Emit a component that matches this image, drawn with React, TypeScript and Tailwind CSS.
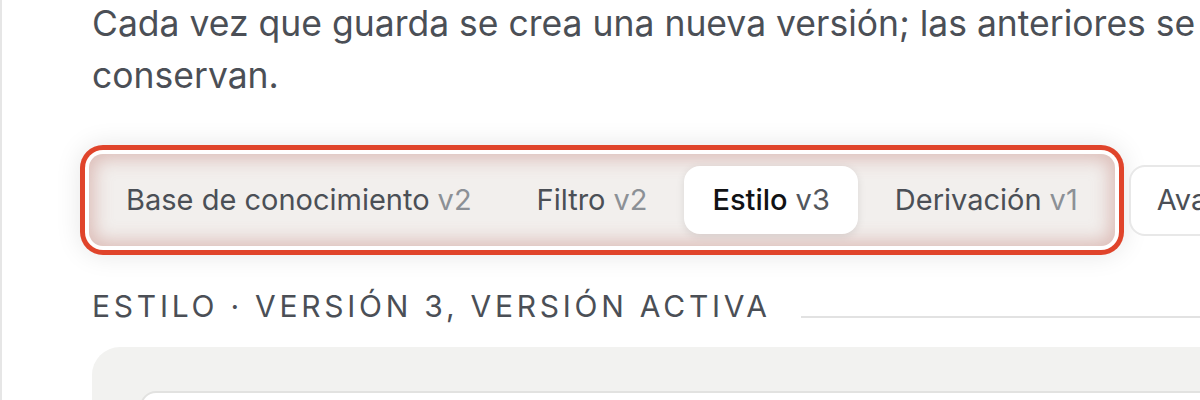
import React from 'react';

const tabs = [
  { name: 'Base de conocimiento', ver: 'v2', active: false },
  { name: 'Filtro', ver: 'v2', active: false },
  { name: 'Estilo', ver: 'v3', active: true },
  { name: 'Derivación', ver: 'v1', active: false },
];

const App: React.FC = () => {
  return (
    <div
      className="relative w-[1200px] h-[400px] overflow-hidden bg-white border-l-2 border-[#e6e6e6]"
      style={{ fontFamily: 'Inter, "Noto Sans", sans-serif' }}
    >
      <div className="w-[1400px] pl-[90px]">
        {/* descripción */}
        <p className="-mt-[2px] w-[1120px] text-[35.5px] leading-[52px] text-[#4b4f56]">
          Cada vez que guarda se crea una nueva versión; las anteriores se conservan.
        </p>

        {/* pestañas de versión */}
        <div className="mt-[52px] flex items-center gap-[14px]">
          <div className="-ml-[3px] flex items-center gap-[9px] rounded-[14px] bg-[#f2efed] px-[9px] py-[12px] shadow-[0_0_0_4px_#ffffff,0_0_0_9px_#e0442b,0_0_26px_9px_rgba(0,0,0,0.10),inset_0_0_18px_5px_rgba(190,120,110,0.42)]">
            {tabs.map((t) => (
              <div
                key={t.name}
                className={
                  t.active
                    ? 'flex h-[68px] items-center rounded-[16px] bg-white px-[28px] text-[29px] shadow-[0_2px_8px_rgba(0,0,0,0.10)]'
                    : 'flex h-[68px] items-center rounded-[16px] px-[28px] text-[29px]'
                }
              >
                <span className={t.active ? 'font-medium text-[#111214]' : 'text-[#4b4f56]'}>{t.name}</span>
                <span className={t.active ? 'ml-[8px] text-[#52565c]' : 'ml-[8px] text-[#8c9096]'}>{t.ver}</span>
              </div>
            ))}
          </div>
          <div className="flex h-[71px] items-center rounded-[16px] border-2 border-[#e8e8e8] bg-white px-[26px] text-[29px] text-[#4b4f56] whitespace-nowrap">
            Avanzado
          </div>
        </div>

        {/* encabezado de la sección */}
        <div className="mt-[40px] flex items-end gap-[30px]">
          <h2 className="text-[30px] leading-[40px] font-normal uppercase tracking-[0.125em] text-[#4b4f56] whitespace-nowrap">
            Estilo · Versión 3, versión activa
          </h2>
          <div className="mb-[8px] h-[2px] flex-1 bg-[#e2e2e2]" />
        </div>

        {/* panel */}
        <div className="mt-[21px] h-[100px] rounded-tl-[28px] bg-[#f2f2f0] pl-[48px] pt-[44px]">
          <div className="h-[60px] rounded-tl-[16px] border-2 border-[#e2e2e0] bg-white" />
        </div>
      </div>
    </div>
  );
};

export default App;
